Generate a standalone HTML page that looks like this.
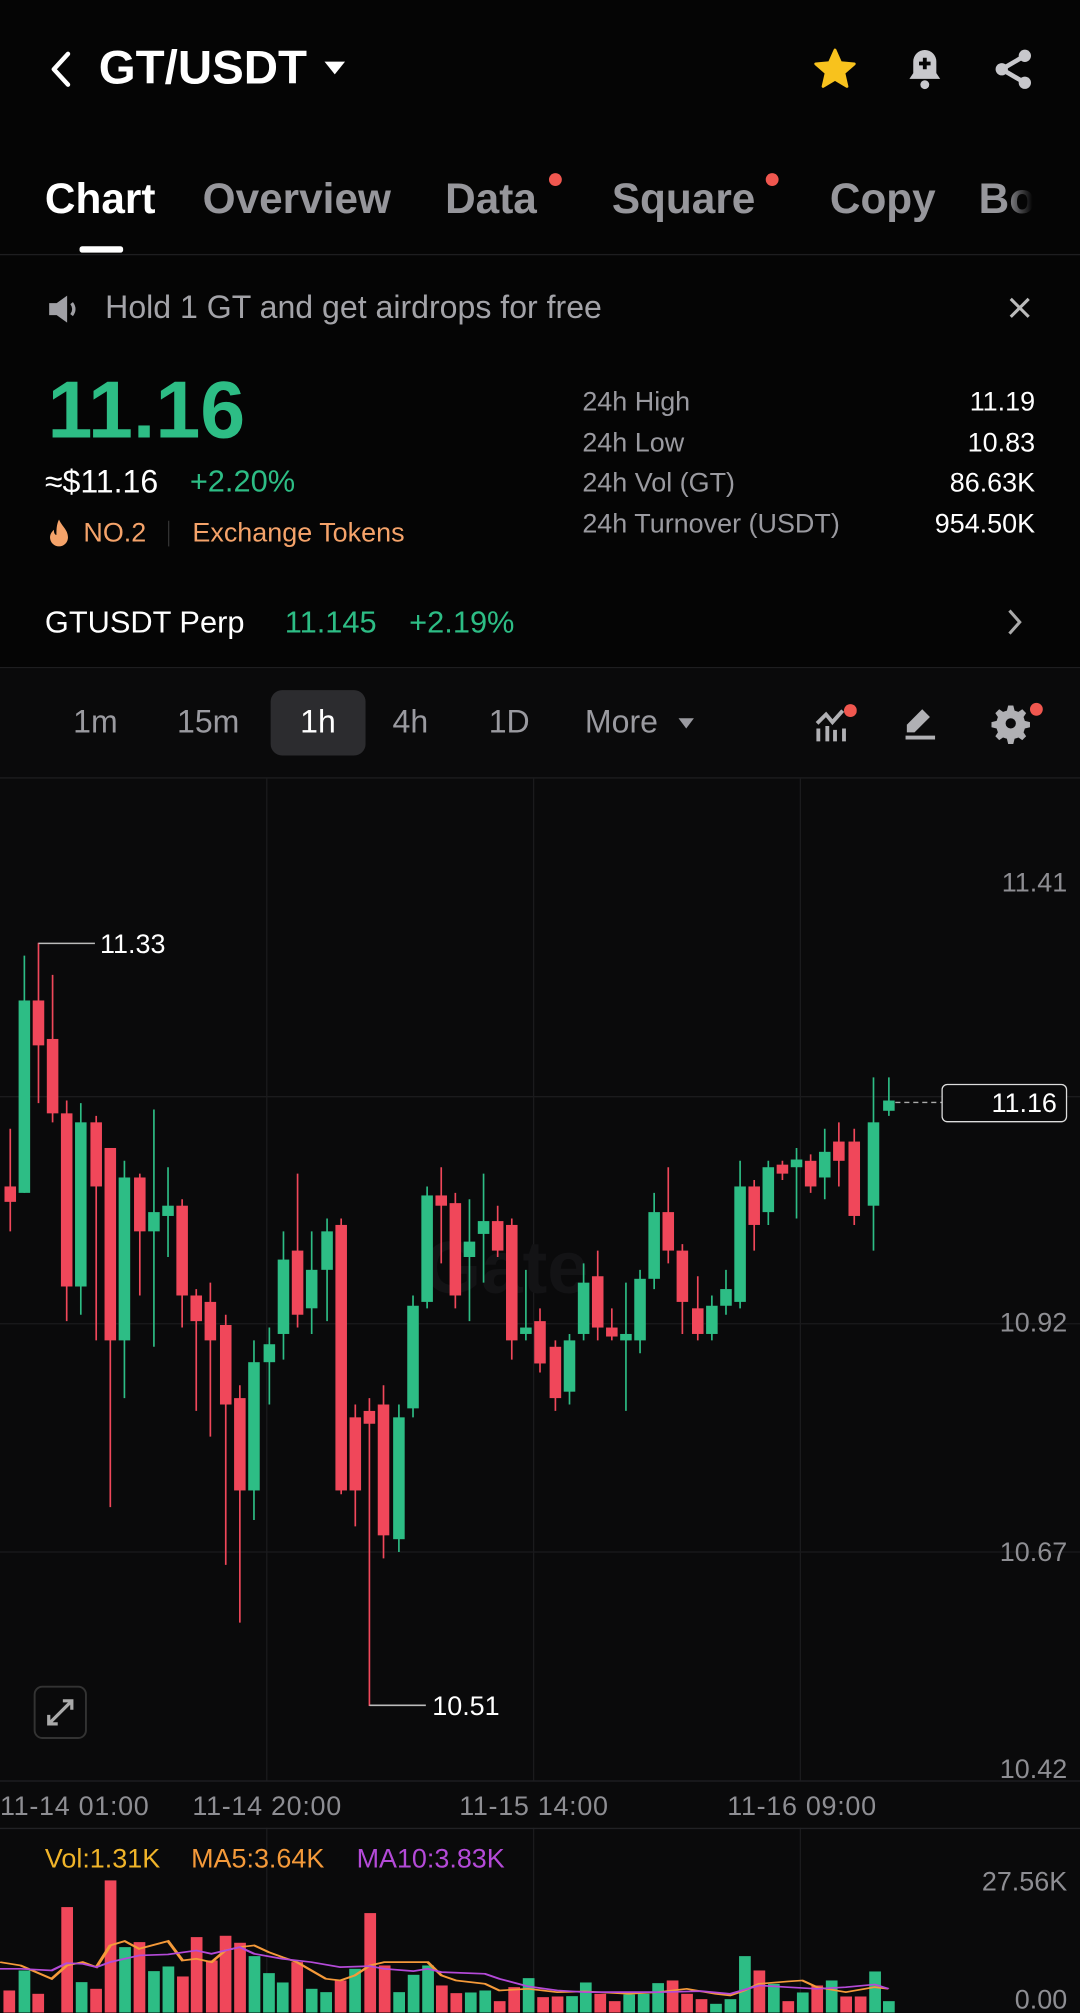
<!DOCTYPE html>
<html><head><meta charset="utf-8"><style>
html,body{margin:0;padding:0;background:#050505;}
body{width:1080px;height:2012px;overflow:hidden;position:relative;}
#s{position:absolute;left:0;top:0;width:842px;height:1569px;transform:scale(1.28266);transform-origin:0 0;font-family:"Liberation Sans",sans-serif;color:#fff;}
.a{position:absolute;white-space:nowrap;}
.g{color:#2dbd85}.gr{color:#8e8e93}
</style></head><body><div id="s">
<svg class="a" style="left:36px;top:38px" width="22" height="32" viewBox="0 0 22 32"><path d="M17 4 L6 16 L17 28" stroke="#fff" stroke-width="3.5" fill="none" stroke-linecap="round" stroke-linejoin="round"/></svg>
<div class="a" style="left:77px;top:32px;font-size:37px;font-weight:bold;">GT/USDT</div>
<svg class="a" style="left:252px;top:47px" width="18" height="12"><path d="M1 1H17L9 11Z" fill="#fff"/></svg>
<svg class="a" style="left:632px;top:36px" width="38" height="36" viewBox="0 0 24 24"><path d="M12 2l2.9 6.6 7.1.6-5.4 4.7 1.6 7-6.2-3.7-6.2 3.7 1.6-7L2 9.2l7.1-.6z" fill="#f8c21d" stroke="#f8c21d" stroke-width="1.5" stroke-linejoin="round"/></svg>
<svg class="a" style="left:703px;top:36px" width="36" height="36" viewBox="0 0 24 24"><path d="M12 2a6 6 0 0 0-6 6v6l-2 3h16l-2-3V8a6 6 0 0 0-6-6z" fill="#c8c8cc"/><circle cx="12" cy="20" r="2.3" fill="#c8c8cc"/><path d="M12 6v6M9 9h6" stroke="#050505" stroke-width="2"/></svg>
<svg class="a" style="left:772px;top:36px" width="36" height="36" viewBox="0 0 24 24"><circle cx="18" cy="5" r="3.2" fill="#c8c8cc"/><circle cx="6" cy="12" r="3.2" fill="#c8c8cc"/><circle cx="18" cy="19" r="3.2" fill="#c8c8cc"/><path d="M18 5L6 12L18 19" stroke="#c8c8cc" stroke-width="2.4" fill="none"/></svg>
<div class="a" style="left:35px;top:136px;font-size:33px;font-weight:bold;">Chart</div>
<div class="a" style="left:158px;top:136px;font-size:33px;font-weight:bold;color:#96969b">Overview</div>
<div class="a" style="left:347px;top:136px;font-size:33px;font-weight:bold;color:#96969b">Data</div>
<div class="a" style="left:428px;top:135px;width:10px;height:10px;border-radius:5px;background:#f0574f"></div>
<div class="a" style="left:477px;top:136px;font-size:33px;font-weight:bold;color:#96969b">Square</div>
<div class="a" style="left:597px;top:135px;width:10px;height:10px;border-radius:5px;background:#f0574f"></div>
<div class="a" style="left:647px;top:136px;font-size:33px;font-weight:bold;color:#96969b">Copy</div>
<div class="a" style="left:763px;top:136px;font-size:33px;font-weight:bold;color:#96969b;width:42px;overflow:hidden;-webkit-mask-image:linear-gradient(90deg,#000 50%,transparent);">Bot</div>
<div class="a" style="left:62px;top:192px;width:34px;height:5px;border-radius:2px;background:#fff"></div>
<div class="a" style="left:0;top:198px;width:842px;height:1px;background:#1e1e20"></div>
<svg class="a" style="left:36px;top:228px" width="28" height="26" viewBox="0 0 24 22"><path d="M2 7h5l7-5v18l-7-5H2z" fill="#a0a0a5"/><path d="M17 7q3 4 0 8" stroke="#a0a0a5" stroke-width="2.2" fill="none"/></svg>
<div class="a" style="left:82px;top:226px;font-size:25px;color:#a3a3a8">Hold 1 GT and get airdrops for free</div>
<svg class="a" style="left:785px;top:230px" width="20" height="20"><path d="M3 3L17 17M17 3L3 17" stroke="#bbb" stroke-width="2.4"/></svg>
<div class="a g" style="left:37px;top:284px;font-size:63px;font-weight:bold;">11.16</div>
<div class="a" style="left:35px;top:362px;font-size:25px;">≈$11.16</div>
<div class="a g" style="left:148px;top:362px;font-size:24px;">+2.20%</div>
<svg class="a" style="left:36px;top:404px" width="20" height="24" viewBox="0 0 20 24"><path d="M10 1C12 6 17 9 17 15a7 7 0 0 1-14 0c0-3 2-5 3-6 0 3 1 4 2 4 0-4 0-8 2-12z" fill="#f5a36a"/></svg>
<div class="a" style="left:65px;top:404px;font-size:21px;color:#f5a36a">NO.2</div>
<div class="a" style="left:131px;top:406px;width:1px;height:20px;background:#333"></div>
<div class="a" style="left:150px;top:404px;font-size:21px;color:#f5a36a">Exchange Tokens</div>
<div class="a" style="left:454px;top:298px;font-size:21px;color:#9a9aa0;line-height:31.5px">24h High<br>24h Low<br>24h Vol (GT)<br>24h Turnover (USDT)</div>
<div class="a" style="right:35px;top:298px;font-size:21px;line-height:31.5px;text-align:right">11.19<br>10.83<br>86.63K<br>954.50K</div>
<div class="a" style="left:35px;top:472px;font-size:24px;">GTUSDT Perp</div>
<div class="a g" style="left:222px;top:472px;font-size:24px;">11.145</div>
<div class="a g" style="left:319px;top:472px;font-size:24px;">+2.19%</div>
<svg class="a" style="left:783px;top:473px" width="16" height="24"><path d="M4 3L12 12L4 21" stroke="#aaa" stroke-width="2.4" fill="none"/></svg>
<div class="a" style="left:0;top:520px;width:842px;height:1px;background:#1e1e20"></div>
<div class="a" style="left:0;top:521px;width:842px;height:1048px;background:#0a0a0b"></div>
<div class="a" style="left:211px;top:538px;width:74px;height:51px;border-radius:9px;background:#2c2c2f"></div>
<div class="a" style="left:57px;top:549px;font-size:25px;color:#9a9aa0">1m</div>
<div class="a" style="left:138px;top:549px;font-size:25px;color:#9a9aa0">15m</div>
<div class="a" style="left:234px;top:549px;font-size:25px;color:#fff">1h</div>
<div class="a" style="left:306px;top:549px;font-size:25px;color:#9a9aa0">4h</div>
<div class="a" style="left:381px;top:549px;font-size:25px;color:#9a9aa0">1D</div>
<div class="a" style="left:456px;top:549px;font-size:25px;color:#9a9aa0">More</div>
<svg class="a" style="left:528px;top:559px" width="14" height="10"><path d="M1 1H13L7 9Z" fill="#9a9aa0"/></svg>
<svg class="a" style="left:634px;top:548px" width="34" height="32" viewBox="0 0 34 32"><path d="M3 16L10 9L15 15L23 6" stroke="#b0b0b4" stroke-width="3" fill="none"/><path d="M4 20v10M11 18v12M17 21v9M24 20v10" stroke="#b0b0b4" stroke-width="3"/><circle cx="29" cy="6" r="5" fill="#f0574f"/></svg>
<svg class="a" style="left:703px;top:550px" width="28" height="28" viewBox="0 0 28 28"><path d="M16 3L22 9L10 21H4V15Z" fill="#b0b0b4"/><path d="M3 25H26" stroke="#b0b0b4" stroke-width="3"/></svg>
<svg class="a" style="left:770px;top:546px" width="46" height="34" viewBox="0 0 46 34"><path d="M16 4h4l1 4 3 1 3-2 3 3-2 3 1 3 4 1v4l-4 1-1 3 2 3-3 3-3-2-3 1-1 4h-4l-1-4-3-1-3 2-3-3 2-3-1-3-4-1v-4l4-1 1-3-2-3 3-3 3 2 3-1z" fill="#b0b0b4"/><circle cx="18" cy="18" r="4" fill="#0a0a0b"/><circle cx="38" cy="7" r="5" fill="#f0574f"/></svg>
<div class="a" style="left:0;top:606px;width:842px;height:1px;background:#1e1e20"></div>
<svg class="a" style="left:0;top:0" width="842" height="1569">
<g stroke="#1b1b1d" stroke-width="1">
<path d="M208 607V1388M416 607V1388M624 607V1388M208 1425V1569M416 1425V1569M624 1425V1569"/>
<path d="M0 855H842M0 1032H842M0 1210H842"/>
</g>
<path d="M0 1388.5H842M0 1425.5H842" stroke="#222225"/>
<text x="330" y="1008" fill="#131315" font-size="58" font-weight="bold" font-family="Liberation Sans">Gate</text>
<g fill="#2dbd85" stroke="#2dbd85" stroke-width="1.3">
<path d="M19 745V930M63 860V1025M97 905V1090M120 865V1050M131 910V980M198 1045V1185M210 1035V1095M221 960V1060M243 960V1040M255 950V1030M311 1095V1210M322 1010V1105M333 925V1020M366 935V1030M377 915V1000M410 990V1045M444 1040V1095M455 985V1045M488 1000V1100M499 990V1055M510 930V1005M555 1010V1045M566 990V1025M577 905V1020M599 905V955M621 895V950M643 880V935M681 840V975M693 840V870"/>
</g>
<g fill="#2dbd85">
<rect x="14.5" y="780" width="9" height="150"/><rect x="58.5" y="875" width="9" height="128"/><rect x="92.5" y="918" width="9" height="127"/><rect x="115.5" y="945" width="9" height="15"/><rect x="126.5" y="940" width="9" height="8"/><rect x="193.5" y="1062" width="9" height="100"/><rect x="205.5" y="1048" width="9" height="14"/><rect x="216.5" y="982" width="9" height="58"/><rect x="238.5" y="990" width="9" height="30"/><rect x="250.5" y="960" width="9" height="30"/><rect x="306.5" y="1105" width="9" height="95"/><rect x="317.5" y="1018" width="9" height="80"/><rect x="328.5" y="932" width="9" height="83"/><rect x="361.5" y="968" width="9" height="12"/><rect x="372.5" y="952" width="9" height="10"/><rect x="405.5" y="1035" width="9" height="5"/><rect x="439.5" y="1045" width="9" height="40"/><rect x="450.5" y="1000" width="9" height="40"/><rect x="483.5" y="1040" width="9" height="5"/><rect x="494.5" y="997" width="9" height="48"/><rect x="505.5" y="945" width="9" height="52"/><rect x="550.5" y="1018" width="9" height="22"/><rect x="561.5" y="1005" width="9" height="13"/><rect x="572.5" y="925" width="9" height="90"/><rect x="594.5" y="910" width="9" height="35"/><rect x="616.5" y="904" width="9" height="6"/><rect x="638.5" y="898" width="9" height="20"/><rect x="676.5" y="875" width="9" height="65"/><rect x="688.5" y="858" width="9" height="8"/>
</g>
<g stroke="#f0475a" stroke-width="1.3">
<path d="M8 880V960M30 735V860M41 760V875M52 858V1030M75 870V1045M86 895V1175M109 915V1010M142 935V1035M153 1005V1100M164 1000V1120M176 1025V1220M187 1080V1265M232 915V1035M266 950V1165M277 1095V1190M288 1090V1330M299 1080V1215M344 910V985M355 930V1020M388 940V980M399 950V1060M421 1020V1070M433 1045V1100M466 975V1045M477 1020V1045M521 910V985M532 970V1040M544 995V1045M588 920V975M610 905V920M632 900V930M654 875V925M666 880V955"/>
</g>
<g fill="#f0475a">
<rect x="3.5" y="925" width="9" height="12"/><rect x="25.5" y="780" width="9" height="35"/><rect x="36.5" y="810" width="9" height="58"/><rect x="47.5" y="868" width="9" height="135"/><rect x="70.5" y="875" width="9" height="50"/><rect x="81.5" y="895" width="9" height="150"/><rect x="104.5" y="918" width="9" height="42"/><rect x="137.5" y="940" width="9" height="70"/><rect x="148.5" y="1010" width="9" height="20"/><rect x="159.5" y="1015" width="9" height="30"/><rect x="171.5" y="1033" width="9" height="62"/><rect x="182.5" y="1090" width="9" height="72"/><rect x="227.5" y="975" width="9" height="50"/><rect x="261.5" y="955" width="9" height="207"/><rect x="272.5" y="1105" width="9" height="57"/><rect x="283.5" y="1100" width="9" height="10"/><rect x="294.5" y="1095" width="9" height="102"/><rect x="339.5" y="932" width="9" height="8"/><rect x="350.5" y="938" width="9" height="72"/><rect x="383.5" y="952" width="9" height="23"/><rect x="394.5" y="955" width="9" height="90"/><rect x="416.5" y="1030" width="9" height="33"/><rect x="428.5" y="1050" width="9" height="40"/><rect x="461.5" y="995" width="9" height="40"/><rect x="472.5" y="1035" width="9" height="7"/><rect x="516.5" y="945" width="9" height="30"/><rect x="527.5" y="975" width="9" height="40"/><rect x="539.5" y="1020" width="9" height="20"/><rect x="583.5" y="925" width="9" height="30"/><rect x="605.5" y="908" width="9" height="7"/><rect x="627.5" y="905" width="9" height="20"/><rect x="649.5" y="890" width="9" height="15"/><rect x="661.5" y="890" width="9" height="58"/>
</g>
<path d="M30 735.5H74M288 1329.5H332" stroke="#bbb" stroke-width="1.2"/>
<text x="78" y="743" fill="#fff" font-size="21" font-family="Liberation Sans">11.33</text>
<text x="337" y="1337" fill="#fff" font-size="21" font-family="Liberation Sans">10.51</text>
<path d="M698 859.5H734" stroke="#aaa" stroke-dasharray="4 3"/>
<rect x="734.5" y="845.5" width="97" height="29" rx="4" fill="#0a0a0b" stroke="#ddd"/>
<text x="824" y="867" fill="#fff" font-size="21" text-anchor="end" font-family="Liberation Sans">11.16</text>
<g fill="#8e8e93" font-size="21" text-anchor="end" font-family="Liberation Sans">
<text x="832" y="695">11.41</text><text x="832" y="1038">10.92</text><text x="832" y="1217">10.67</text><text x="832" y="1386">10.42</text><text x="832" y="1474">27.56K</text><text x="832" y="1566">0.00</text>
</g>
<g fill="#8e8e93" font-size="21" font-family="Liberation Sans">
<text x="0" y="1415" textLength="116">11-14 01:00</text><text x="150" y="1415" textLength="116">11-14 20:00</text><text x="358" y="1415" textLength="116">11-15 14:00</text><text x="567" y="1415" textLength="116">11-16 09:00</text>
</g>
<rect x="27" y="1315" width="40" height="40" rx="6" fill="none" stroke="#333" stroke-width="1.5"/>
<path d="M38 1344L56 1326M49 1326H56V1333M38 1337V1344H45" stroke="#aaa" stroke-width="2.5" fill="none"/>
<text x="35" y="1456" font-size="21" fill="#f0b429" font-family="Liberation Sans">Vol:1.31K</text>
<text x="149" y="1456" font-size="21" fill="#f59a3a" font-family="Liberation Sans">MA5:3.64K</text>
<text x="278" y="1456" font-size="21" fill="#b44ad8" font-family="Liberation Sans">MA10:3.83K</text>
</svg>
<svg class="a" style="left:0;top:1387.7px" width="842" height="181" viewBox="0 0 1568 696" preserveAspectRatio="none">
<g fill="#f0475a"><rect x="5" y="630" width="17" height="70"/><rect x="47" y="640" width="17" height="60"/><rect x="89" y="380" width="17" height="320"/><rect x="131" y="625" width="17" height="75"/><rect x="152" y="300" width="17" height="400"/><rect x="194" y="485" width="17" height="215"/><rect x="257" y="588" width="17" height="112"/><rect x="277" y="470" width="17" height="230"/><rect x="299" y="540" width="17" height="160"/><rect x="319" y="466" width="17" height="234"/><rect x="340" y="487" width="17" height="213"/><rect x="423" y="545" width="17" height="155"/><rect x="486" y="600" width="17" height="100"/><rect x="529" y="398" width="17" height="302"/><rect x="550" y="555" width="17" height="145"/><rect x="633" y="615" width="17" height="85"/><rect x="654" y="638" width="17" height="62"/><rect x="717" y="662" width="17" height="38"/><rect x="738" y="620" width="17" height="80"/><rect x="780" y="650" width="17" height="50"/><rect x="801" y="648" width="17" height="52"/><rect x="863" y="640" width="17" height="60"/><rect x="884" y="662" width="17" height="38"/><rect x="968" y="600" width="17" height="100"/><rect x="989" y="640" width="17" height="60"/><rect x="1010" y="656" width="17" height="44"/><rect x="1094" y="570" width="17" height="130"/><rect x="1136" y="662" width="17" height="38"/><rect x="1178" y="615" width="17" height="85"/><rect x="1220" y="648" width="17" height="52"/><rect x="1241" y="648" width="17" height="52"/></g>
<g fill="#2dbd85"><rect x="27" y="570" width="17" height="130"/><rect x="110" y="605" width="17" height="95"/><rect x="173" y="500" width="17" height="200"/><rect x="215" y="572" width="17" height="128"/><rect x="236" y="558" width="17" height="142"/><rect x="361" y="527" width="17" height="173"/><rect x="382" y="578" width="17" height="122"/><rect x="402" y="606" width="17" height="94"/><rect x="444" y="625" width="17" height="75"/><rect x="465" y="635" width="17" height="65"/><rect x="507" y="565" width="17" height="135"/><rect x="571" y="635" width="17" height="65"/><rect x="592" y="583" width="17" height="117"/><rect x="613" y="555" width="17" height="145"/><rect x="675" y="636" width="17" height="64"/><rect x="696" y="630" width="17" height="70"/><rect x="759" y="593" width="17" height="107"/><rect x="822" y="647" width="17" height="53"/><rect x="842" y="606" width="17" height="94"/><rect x="905" y="642" width="17" height="58"/><rect x="926" y="640" width="17" height="60"/><rect x="947" y="608" width="17" height="92"/><rect x="1031" y="670" width="17" height="30"/><rect x="1052" y="656" width="17" height="44"/><rect x="1073" y="527" width="17" height="173"/><rect x="1115" y="610" width="17" height="90"/><rect x="1157" y="636" width="17" height="64"/><rect x="1199" y="600" width="17" height="100"/><rect x="1262" y="573" width="17" height="127"/><rect x="1282" y="662" width="17" height="38"/></g>
<polyline fill="none" stroke="#f59a3a" stroke-width="5" points="0,545 30,555 75,595 97,555 120,545 140,560 160,495 181,482 202,505 244,482 265,540 285,535 307,545 327,510 348,500 369,495 390,515 410,530 431,545 452,570 473,595 494,600 515,585 537,555 558,545 621,545 641,585 662,600 704,610 725,630 767,625 809,635 850,633 913,640 955,635 997,625 1039,640 1060,645 1081,630 1102,610 1144,603 1165,600 1186,620 1228,635 1270,620 1290,625"/>
<polyline fill="none" stroke="#b44ad8" stroke-width="5" points="0,565 30,565 75,570 97,548 120,550 140,560 160,545 181,535 202,525 244,522 285,510 307,520 348,500 369,520 410,535 452,545 494,560 537,557 558,565 600,572 621,565 641,575 704,580 725,595 767,618 809,630 850,635 913,635 955,635 1018,632 1060,640 1102,615 1144,620 1186,625 1228,620 1270,612 1290,625"/>
</svg>
</div></body></html>
